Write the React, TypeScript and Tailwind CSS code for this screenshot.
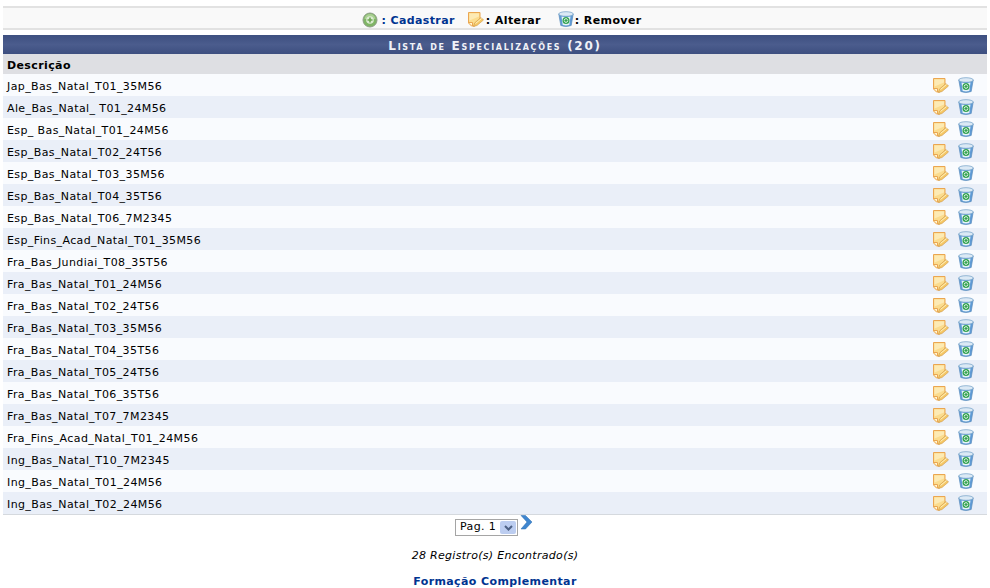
import React from "react";

const rows = [
  "Jap_Bas_Natal_T01_35M56",
  "Ale_Bas_Natal_ T01_24M56",
  "Esp_ Bas_Natal_T01_24M56",
  "Esp_Bas_Natal_T02_24T56",
  "Esp_Bas_Natal_T03_35M56",
  "Esp_Bas_Natal_T04_35T56",
  "Esp_Bas_Natal_T06_7M2345",
  "Esp_Fins_Acad_Natal_T01_35M56",
  "Fra_Bas_Jundiai_T08_35T56",
  "Fra_Bas_Natal_T01_24M56",
  "Fra_Bas_Natal_T02_24T56",
  "Fra_Bas_Natal_T03_35M56",
  "Fra_Bas_Natal_T04_35T56",
  "Fra_Bas_Natal_T05_24T56",
  "Fra_Bas_Natal_T06_35T56",
  "Fra_Bas_Natal_T07_7M2345",
  "Fra_Fins_Acad_Natal_T01_24M56",
  "Ing_Bas_Natal_T10_7M2345",
  "Ing_Bas_Natal_T01_24M56",
  "Ing_Bas_Natal_T02_24M56",
];

function AddIcon() {
  return (
    <svg width="16" height="16" viewBox="0 0 16 16" className="shrink-0">
      <circle cx="8" cy="8" r="7" fill="#7fb565" stroke="#8f9f88" strokeWidth="1" />
      <path d="M2.500 7a5.500 5 0 0 1 11 0z" fill="#a9d092" />
      <circle cx="8" cy="8" r="3.800" fill="#dcecd2" />
      <path d="M8 5.500v5M5.500 8h5" stroke="#6ea653" strokeWidth="1.600" />
    </svg>
  );
}

function EditIcon() {
  return (
    <svg width="16" height="16" viewBox="0 0 16 16" className="shrink-0">
      <path d="M0.500 0.500h11.500v7.500l-5 6H3.500l-3-3z" fill="#fbdc8e" stroke="#eba651" strokeWidth="1" />
      <path d="M1.500 1.500h9.500v3l-9.500 4z" fill="#fdeab4" />
      <path d="M1 10.500h3.500V14" fill="#fff6d8" stroke="#eba651" strokeWidth="1" />
      <path d="M6.500 11l6.500-5.500 2.500 2.500-6.500 5.500-3.500 1z" fill="#f5c765" stroke="#cf9848" strokeWidth="0.600" />
      <path d="M7.500 11.500l6-5" stroke="#fff3c4" strokeWidth="1" />
    </svg>
  );
}

function TrashIcon() {
  return (
    <svg width="16" height="17" viewBox="0 0 16 17" className="shrink-0">
      <path d="M0.800 3l2 11.500q5 2.200 10.400 0l2-11.500z" fill="#5f9bd6" stroke="#5a8dbc" strokeWidth="0.700" />
      <ellipse cx="8" cy="3" rx="7.300" ry="2.300" fill="#dbe9f5" stroke="#6f9dc6" strokeWidth="0.700" />
      <path d="M3.500 5.500l1.200 8.500q3.300 .9 6.600 0l1.200-8.500q-4.500 1-9 0z" fill="#e6f3f8" />
      <circle cx="8" cy="9.500" r="3.500" fill="#34a352" />
      <path d="M6.200 9.500a1.800 1.800 0 0 1 3.400-.8M9.800 9.500a1.800 1.800 0 0 1-3.400 .8" stroke="#fff" strokeWidth="1" fill="none" />
    </svg>
  );
}

function NextArrow() {
  return (
    <svg width="13" height="15" viewBox="0 0 13 15" className="shrink-0">
      <path d="M1 0.500h4.500l6.500 6.500-6.500 7H1l6-7z" fill="#3f86cf" stroke="#2a6cb0" strokeWidth="0.500" />
    </svg>
  );
}

export default function App() {
  return (
    <div className="h-[588px] w-[990px] overflow-hidden bg-white px-[3px] pt-[6px] font-['DejaVu_Sans',Verdana,sans-serif] text-[11px] tracking-[0.39px] text-black">
      {/* legenda */}
      <div className="flex h-[24px] items-center justify-center border-y-2 border-[#e2e2e2] bg-[#f9f9f9] pl-[14px] pt-[4px] font-bold">
        <AddIcon />
        <span className="ml-[3px] pt-[2px] text-[#003390]">: Cadastrar</span>
        <span className="ml-[13px]"><EditIcon /></span>
        <span className="ml-[2px] pt-[2px]">: Alterar</span>
        <span className="ml-[17px] mt-[-2px]"><TrashIcon /></span>
        <span className="ml-[1px] pt-[2px]">: Remover</span>
      </div>

      {/* listagem */}
      <div className="mt-[5px] border-b border-[#d5d9de]">
        <div className="flex h-[19px] items-center justify-center bg-gradient-to-b from-[#3d4f80] via-[#4b5c8d] to-[#3d4f80] pt-[3px] text-[12px] font-bold tracking-[1.7px] text-[#f0f2f8] [font-variant:small-caps]">
          Lista de Especializações (20)
        </div>
        <div className="flex h-[20px] items-center bg-[#dedfe3] pl-[4px] pt-[4px] font-bold">Descrição</div>
        {rows.map((row, i) => (
          <div
            key={row + i}
            className={`flex h-[22px] items-center justify-between pl-[4px] pr-[13px] ${i % 2 === 0 ? "bg-[#f9fbfe]" : "bg-[#eaeff8]"}`}
          >
            <span className="pt-[4px]">{row}</span>
            <div className="flex items-center gap-[9px] pt-[2px]">
              <EditIcon />
              <span className="mt-[-2px]"><TrashIcon /></span>
            </div>
          </div>
        ))}
      </div>

      {/* paginacao */}
      <div className="flex items-start justify-center pr-[2px]">
        <div className="mt-[4px] flex h-[17px] w-[63px] items-center justify-between border border-[#a5a5a5] bg-white pl-[4px] pr-[1px]">
          <span>Pag. 1</span>
          <span className="flex h-[13px] w-[16px] items-center justify-center rounded-[2px] bg-[#bccdf0]">
            <svg width="9" height="6" viewBox="0 0 9 6">
              <path d="M1 1l3.500 3.500L8 1" fill="none" stroke="#4d6185" strokeWidth="2" />
            </svg>
          </span>
        </div>
        <span className="ml-[2px]"><NextArrow /></span>
      </div>

      <p className="mt-[13px] text-center italic leading-[14px] tracking-[0.3px]">28 Registro(s) Encontrado(s)</p>
      <p className="mt-[12px] text-center font-bold leading-[14px] text-[#003390]">Formação Complementar</p>
    </div>
  );
}
